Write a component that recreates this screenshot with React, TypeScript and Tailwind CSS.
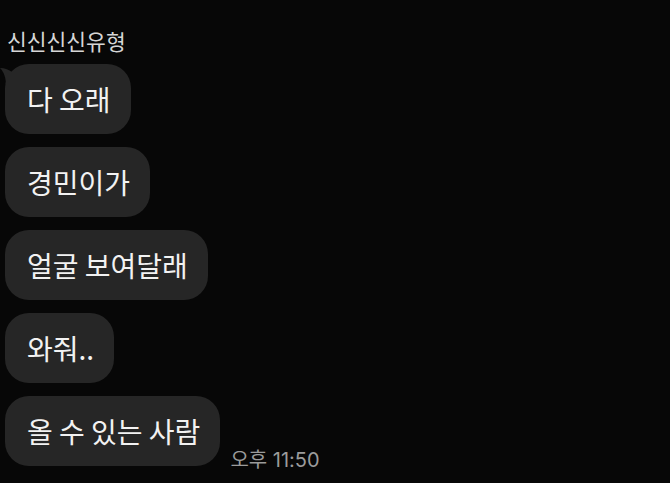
const messages = ["다 오래", "경민이가", "얼굴 보여달래", "와줘..", "올 수 있는 사람"];

export default function App() {
  return (
    <div className="w-[670px] h-[483px] bg-[#070707] overflow-hidden [font-family:'Noto_Sans_CJK_KR','Noto_Sans',sans-serif]">
      <div className="pt-[26px] pl-[7px] text-[21.5px] leading-[30px] text-[#d6d6d6]">
        신신신신유형
      </div>
      <div className="flex flex-col gap-[13px] pl-[5px] mt-[8px]">
        {messages.map((m, i) => (
          <div key={i} className="flex items-end gap-[10px]">
            <div className="relative h-[70px] rounded-[24px] bg-[#262626] flex items-center pl-[22px] pr-[20px] text-[28px] text-[#f2f2f2] whitespace-nowrap">
              {i === 0 && (
                <svg
                  className="absolute left-[-5px] top-[2px]"
                  width="16"
                  height="20"
                  viewBox="0 0 16 20"
                >
                  <path d="M0 2 C5 2 9 4 12 6 L16 6 L16 20 L6 20 C6 12 4 6 0 2 Z" fill="#262626" />
                </svg>
              )}
              {m}
            </div>
            {i === messages.length - 1 && (
              <span className="mb-[-7px] text-[20px] leading-[26px] text-[#9b9b9b] whitespace-nowrap [font-family:Inter,'Noto_Sans_CJK_KR',sans-serif]">
                오후 11:50
              </span>
            )}
          </div>
        ))}
      </div>
    </div>
  );
}
